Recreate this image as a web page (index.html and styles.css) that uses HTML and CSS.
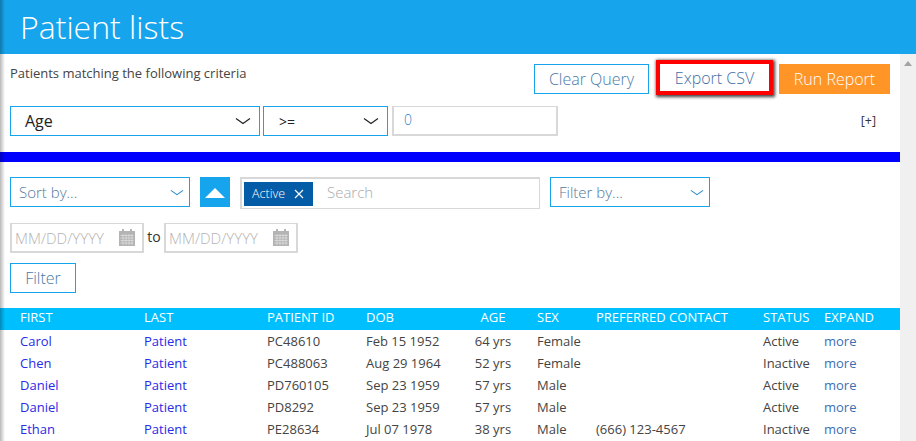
FILE: index.html
```html
<!DOCTYPE html>
<html lang="en">
<head>
<meta charset="utf-8">
<title>Patient lists</title>
<link rel="stylesheet" href="styles.css">
</head>
<body>
<div class="edge-shadow"></div>
<header class="page-header"><h1>Patient lists</h1></header>
<div class="frame">
  <main class="content">
    <section class="query">
      <div class="query-top">
        <p class="criteria-label">Patients matching the following criteria</p>
        <div class="actions">
          <button class="btn btn-outline">Clear Query</button>
          <button class="btn btn-export">Export CSV</button>
          <button class="btn btn-run">Run Report</button>
        </div>
      </div>
      <div class="criteria-row">
        <div class="select select-age"><span>Age</span><svg class="chev" viewBox="0 0 16 8"><path d="M1 1.500 8 6.500 15 1.500"/></svg></div>
        <div class="select select-op"><span>&gt;=</span><svg class="chev" viewBox="0 0 16 8"><path d="M1 1.500 8 6.500 15 1.500"/></svg></div>
        <div class="value-input">0</div>
        <span class="add-link">[+]</span>
      </div>
    </section>
    <div class="divider"></div>
    <section class="filters">
      <div class="filter-row">
        <div class="select select-sort"><span>Sort by...</span><svg class="chev chev-blue" viewBox="0 0 16 8"><path d="M1 1.500 8 6.500 15 1.500"/></svg></div>
        <div class="sort-toggle"><svg viewBox="0 0 20 10"><path d="M10 0 20 10H0Z"/></svg></div>
        <div class="tag-input">
          <span class="tag">Active <svg viewBox="0 0 10 10"><path d="M1 1 9 9M9 1 1 9"/></svg></span>
          <span class="search-placeholder">Search</span>
        </div>
        <div class="select select-filter"><span>Filter by...</span><svg class="chev chev-blue" viewBox="0 0 16 8"><path d="M1 1.500 8 6.500 15 1.500"/></svg></div>
      </div>
      <div class="date-row">
        <div class="date-input"><span>MM/DD/YYYY</span>
          <svg class="cal" viewBox="0 0 16 17"><path class="cal-body" d="M0 2h3V0h2v2h6V0h2v2h3v15H0Z"/><path class="cal-grid" d="M1.500 6.500h13M1.500 9h13M1.500 11.500h13M1.500 14h13M4 5v11M7 5v11M10 5v11M13 5v11"/></svg>
        </div>
        <span class="to">to</span>
        <div class="date-input"><span>MM/DD/YYYY</span>
          <svg class="cal" viewBox="0 0 16 17"><path class="cal-body" d="M0 2h3V0h2v2h6V0h2v2h3v15H0Z"/><path class="cal-grid" d="M1.500 6.500h13M1.500 9h13M1.500 11.500h13M1.500 14h13M4 5v11M7 5v11M10 5v11M13 5v11"/></svg>
        </div>
      </div>
      <button class="btn btn-outline btn-filter">Filter</button>
    </section>
    <table class="patients">
      <colgroup><col class="c1"><col class="c2"><col class="c3"><col class="c4"><col class="c5"><col class="c6"><col class="c7"><col class="c8"><col class="c9"></colgroup>
      <thead><tr><th>FIRST</th><th>LAST</th><th>PATIENT ID</th><th>DOB</th><th class="age">AGE</th><th>SEX</th><th>PREFERRED CONTACT</th><th>STATUS</th><th>EXPAND</th></tr></thead>
      <tbody>
        <tr><td class="name">Carol</td><td class="name">Patient</td><td>PC48610</td><td>Feb 15 1952</td><td class="age">64 yrs</td><td>Female</td><td></td><td>Active</td><td class="more">more</td></tr>
        <tr><td class="name">Chen</td><td class="name">Patient</td><td>PC488063</td><td>Aug 29 1964</td><td class="age">52 yrs</td><td>Female</td><td></td><td>Inactive</td><td class="more">more</td></tr>
        <tr><td class="name">Daniel</td><td class="name">Patient</td><td>PD760105</td><td>Sep 23 1959</td><td class="age">57 yrs</td><td>Male</td><td></td><td>Active</td><td class="more">more</td></tr>
        <tr><td class="name">Daniel</td><td class="name">Patient</td><td>PD8292</td><td>Sep 23 1959</td><td class="age">57 yrs</td><td>Male</td><td></td><td>Active</td><td class="more">more</td></tr>
        <tr><td class="name">Ethan</td><td class="name">Patient</td><td>PE28634</td><td>Jul 07 1978</td><td class="age">38 yrs</td><td>Male</td><td>(666) 123-4567</td><td>Inactive</td><td class="more">more</td></tr>
      </tbody>
    </table>
  </main>
  <aside class="scrollbar"><svg viewBox="0 0 8 5"><path d="M4 0 8 5H0Z"/></svg></aside>
</div>
</body>
</html>
```
FILE: styles.css
```css
* { box-sizing: border-box; }
html, body { margin: 0; height: 441px; overflow: hidden; }
body { font-family: "Open Sans", sans-serif; background: #fff; color: #333; }

.edge-shadow {
  position: absolute; left: 0; top: 0; bottom: 0; width: 5px;
  background: linear-gradient(to right, rgba(0,0,0,.28), rgba(0,0,0,0));
  pointer-events: none;
}

.page-header { height: 54px; background: #16a5ec; padding-left: 20px; }
.page-header h1 { margin: 0; font-size: 32px; line-height: 54px; font-weight: 300; color: #fff; }

.frame { display: flex; height: 387px; }
.content { width: 900px; flex: none; }
.scrollbar { flex: 1; background: #f0f0f0; padding: 7px 4px; }
.scrollbar svg { display: block; width: 8px; height: 5px; fill: #a3a3a3; }

.query { padding: 10px 10px 0; }
.query-top { display: flex; justify-content: space-between; align-items: flex-start; height: 30px; }
.criteria-label { margin: 0; font-size: 13px; line-height: 18px; color: #444; }
.actions { display: flex; align-items: flex-start; height: 30px; }

.btn { height: 30px; font-family: inherit; font-size: 16px; font-weight: 300; padding: 0; background: #fff; border: 0; }
.btn-outline { border: 1px solid #16a5ec; color: #4a7aa8; }
.actions .btn-outline { width: 115px; }
.btn-export { width: 117px; height: 35px; margin: -4px 6px 0 7px; color: #3f6fa5; border: 4px solid #f00; box-shadow: 1px 1px 3px 1px rgba(0,0,0,.75); }
.btn-run { width: 111px; background: #ff9526; color: #fff; }

.criteria-row { display: flex; align-items: center; margin-top: 12px; height: 30px; }
.select { display: flex; align-items: center; justify-content: space-between; height: 30px; border: 1px solid #16a5ec; background: #fff; }
.select-age { width: 250px; padding: 0 8px 0 14px; font-size: 16px; color: #222; }
.select-op { width: 125px; margin-left: 3px; padding: 0 8px 0 15px; font-size: 14px; color: #222; }
.chev { width: 16px; height: 8px; fill: none; stroke: #222; stroke-width: 1.2; }
.chev-blue { width: 14px; height: 7px; stroke: #2f8fd0; }
.value-input { width: 166px; height: 30px; margin-left: 4px; border: 2px solid #d8d8d8; border-width: 1px 2px 2px 2px; padding-left: 10px; font-size: 14px; line-height: 26px; font-weight: 300; color: #2f7fd0; }
.add-link { margin-left: auto; margin-right: 14px; margin-top: -2px; font-size: 12.5px; color: #333; }

.divider { height: 10px; margin-top: 16px; background: #0000ff; }

.filters { padding: 15px 10px 0; }
.filter-row { display: flex; align-items: flex-start; height: 32px; }
.select-sort { width: 180px; padding: 0 5px 0 8px; font-size: 15px; font-weight: 300; color: #54789c; }
.select-filter { width: 160px; margin-left: 10px; padding: 0 5px 0 8px; font-size: 15px; font-weight: 300; color: #54789c; }
.sort-toggle { width: 30px; height: 30px; margin-left: 10px; padding-top: 2px; background: #16a5ec; display: flex; align-items: center; justify-content: center; }
.sort-toggle svg { width: 20px; height: 10px; fill: #fff; }
.tag-input { display: flex; align-items: center; width: 300px; height: 32px; margin-left: 10px; border: 2px solid #d8d8d8; border-width: 2px 1px 1px 2px; padding-left: 2px; }
.tag { display: flex; align-items: center; gap: 9px; width: 69px; height: 24px; padding-left: 8px; background: #045ba6; color: #fff; font-size: 12.5px; font-weight: 300; }
.tag svg { width: 10px; height: 10px; stroke: #fff; stroke-width: 1.1; fill: none; }
.search-placeholder { margin: -3px 0 0 14px; font-size: 15px; font-weight: 300; color: #aaa; }

.date-row { display: flex; align-items: center; margin-top: 14px; height: 30px; }
.date-input { display: flex; align-items: center; justify-content: space-between; width: 134px; height: 30px; border: 2px solid #d8d8d8; border-width: 1px 2px 2px 2px; padding: 0 7px 0 3px; font-size: 15px; font-weight: 300; color: #b4b4b4; white-space: nowrap; }
.cal { width: 16px; height: 17px; flex: none; }
.cal-body { fill: #b4b4b4; }
.cal-grid { stroke: #e8e8e8; stroke-width: .6; fill: none; }
.to { width: 20px; text-align: center; font-size: 14px; color: #333; position: relative; top: -2px; }

.btn-filter { display: block; width: 66px; margin-top: 10px; }

.patients { width: 900px; margin-top: 15px; border-collapse: collapse; table-layout: fixed; font-size: 13px; }
.c1 { width: 144px; } .c2 { width: 123px; } .c3 { width: 99px; } .c4 { width: 100px; } .c5 { width: 71px; }
.c6 { width: 59px; } .c7 { width: 167px; } .c8 { width: 61px; } .c9 { width: 76px; }
.patients th { background: #00bfff; color: #fff; height: 22px; padding: 0 0 4px; text-align: left; font-weight: 400; white-space: nowrap; }
.patients th:first-child, .patients td:first-child { padding-left: 20px; }
.patients td { height: 22px; padding: 0; color: #444; white-space: nowrap; }
.patients .age { text-align: center; padding-right: 17px; }
.patients th.age { padding-bottom: 4px; }
.patients .name { color: #2a2ae8; }
.patients .more { color: #3b6fb5; }
```
